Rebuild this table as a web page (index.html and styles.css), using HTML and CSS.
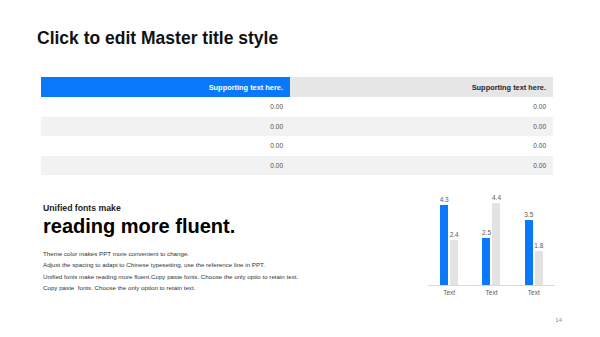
FILE: index.html
```html
<!DOCTYPE html>
<html>
<head>
<meta charset="utf-8">
<link rel="stylesheet" href="styles.css">
</head>
<body>
<div class="slide">
  <h1 class="title">Click to edit Master title style</h1>
  <table class="data">
    <tr class="head">
      <th class="c1">Supporting text here.</th>
      <th class="c2">Supporting text here.</th>
    </tr>
    <tr><td>0.00</td><td>0.00</td></tr>
    <tr class="alt"><td>0.00</td><td>0.00</td></tr>
    <tr><td>0.00</td><td>0.00</td></tr>
    <tr class="alt"><td>0.00</td><td>0.00</td></tr>
  </table>
  <div class="bottom">
    <div class="copy">
      <div class="kicker">Unified fonts make</div>
      <div class="headline">reading more fluent.</div>
      <div class="body">
        <p>Theme color makes PPT more convenient to change.</p>
        <p>Adjust the spacing to adapt to Chinese typesetting, use the reference line in PPT.</p>
        <p>Unified fonts make reading more fluent.Copy paste fonts. Choose the only optio to retain text.</p>
        <p>Copy paste&nbsp; fonts. Choose the only option to retain text.</p>
      </div>
    </div>
    <div class="chart">
      <div class="plot">
        <div class="group">
          <div class="bar"><span class="val">4.3</span><div class="fill blue" style="height:80px"></div></div>
          <div class="bar"><span class="val">2.4</span><div class="fill grey" style="height:45px"></div></div>
        </div>
        <div class="group">
          <div class="bar"><span class="val">2.5</span><div class="fill blue" style="height:47px"></div></div>
          <div class="bar"><span class="val">4.4</span><div class="fill grey" style="height:82px"></div></div>
        </div>
        <div class="group">
          <div class="bar"><span class="val">3.5</span><div class="fill blue" style="height:65px"></div></div>
          <div class="bar"><span class="val">1.8</span><div class="fill grey" style="height:34px"></div></div>
        </div>
      </div>
      <div class="axis">
        <span>Text</span><span>Text</span><span>Text</span>
      </div>
    </div>
  </div>
  <div class="footer"><span class="page">14</span></div>
</div>
</body>
</html>
```

FILE: styles.css
```css
* { box-sizing: border-box; }
html, body { margin: 0; padding: 0; background: #fff; }
body { font-family: "Liberation Sans", Arial, sans-serif; }

.slide {
  width: 600px;
  height: 337px;
  overflow: hidden;
  display: flex;
  flex-direction: column;
}

.title {
  margin: 0;
  padding: 28px 0 0 37px;
  font-size: 17.5px;
  line-height: 20px;
  font-weight: bold;
  color: #111;
}

.data {
  margin: 29px 0 0 41px;
  width: 512px;
  border-collapse: collapse;
  table-layout: fixed;
}
.data th, .data td {
  padding: 0 7px;
  text-align: right;
  white-space: nowrap;
}
.data th {
  height: 20px;
  font-size: 7.4px;
  font-weight: bold;
}
.data .c1 { width: 249px; background: #0a78fa; color: #fff; }
.data .c2 { background: #e6e6e6; color: #262626; }
.data td {
  height: 19.5px;
  font-size: 6.5px;
  color: #4d4d4d;
}
.data .alt td { background: #f2f2f2; }

.bottom {
  display: flex;
  justify-content: space-between;
  padding: 0 45px 0 43px;
  margin-top: 11px;
}

.copy { padding-top: 17px; }
.kicker {
  font-size: 8.7px;
  font-weight: bold;
  line-height: 11px;
  color: #222;
}
.headline {
  font-size: 20px;
  font-weight: bold;
  line-height: 24px;
  color: #000;
}
.body { margin-top: 10px; }
.body p {
  margin: 0;
  font-size: 6.2px;
  line-height: 11.4px;
  color: #333;
}

.chart { width: 127px; }
.plot {
  height: 100px;
  display: flex;
  border-bottom: 1px solid #d9d9d9;
}
.group {
  flex: 1;
  display: flex;
  justify-content: center;
  align-items: flex-end;
  gap: 2px;
}
.bar {
  width: 8px;
  display: flex;
  flex-direction: column;
  align-items: center;
}
.val {
  font-size: 6.5px;
  line-height: 9px;
  color: #595959;
  white-space: nowrap;
}
.fill { width: 8px; margin-top: 1px; }
.fill.blue { background: #0a78fa; }
.fill.grey { background: #e3e3e3; }

.axis {
  display: flex;
  padding-top: 2px;
}
.axis span {
  flex: 1;
  text-align: center;
  font-size: 6.5px;
  line-height: 9px;
  color: #595959;
}

.footer {
  display: flex;
  justify-content: flex-end;
  padding: 20px 38px 0 0;
}
.page {
  font-size: 6px;
  color: #8c8c8c;
}
```
